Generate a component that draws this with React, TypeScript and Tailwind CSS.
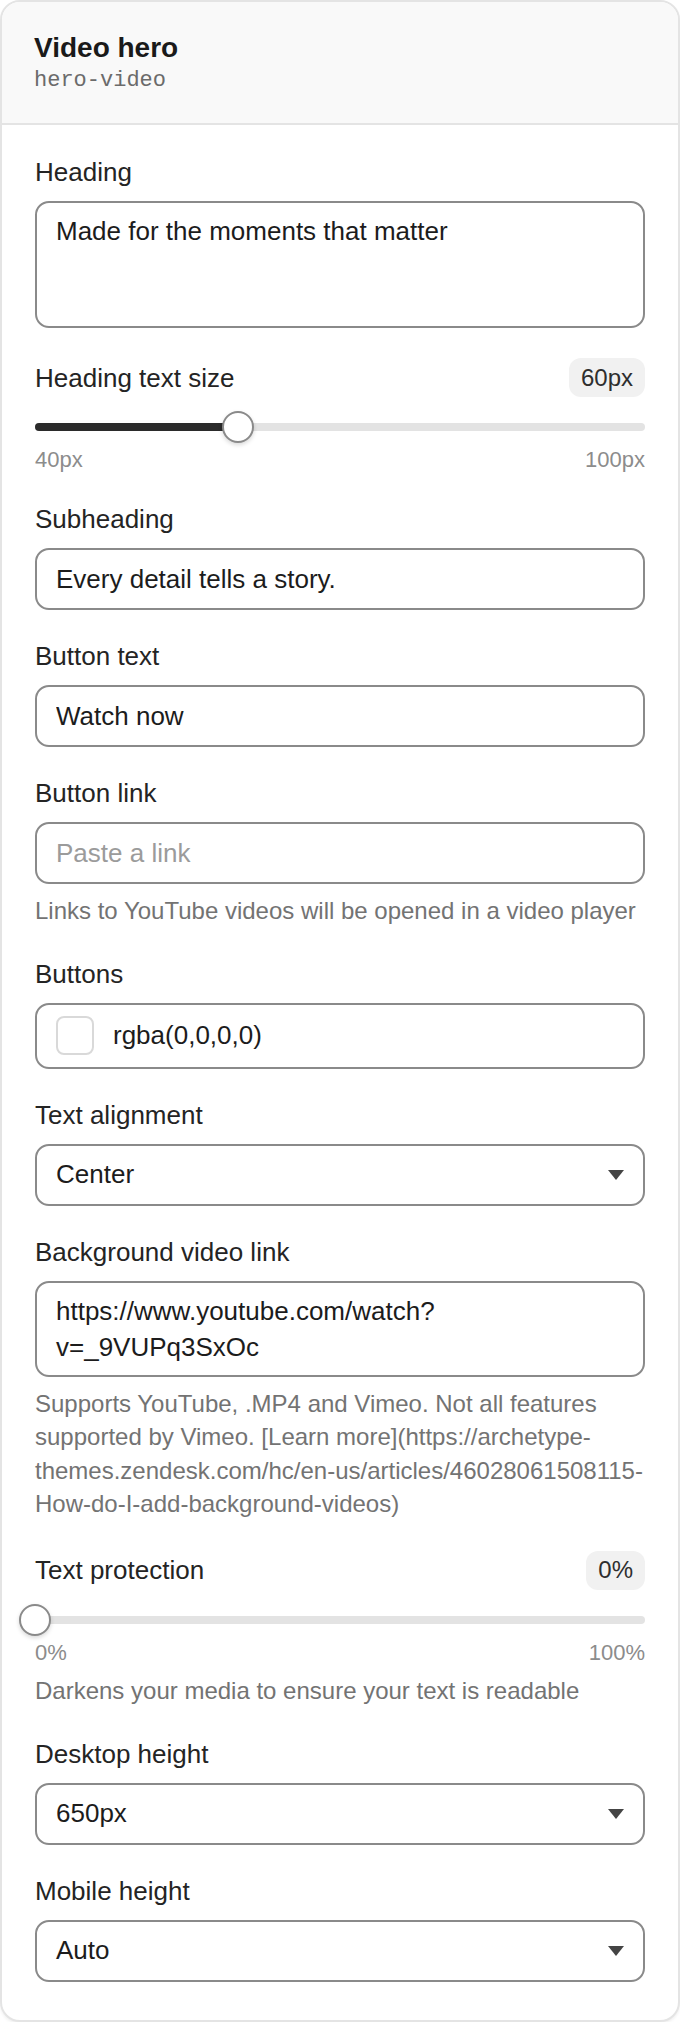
import React from 'react';

const sans = { fontFamily: '"Liberation Sans", Arial, sans-serif' };

function Label({ children }: { children: React.ReactNode }) {
  return <div className="text-[26px] leading-8 text-[#242424] mb-[13px]">{children}</div>;
}

function Help({ children }: { children: React.ReactNode }) {
  return <p className="mt-[10px] text-[24px] leading-[33.5px] text-[#737373]">{children}</p>;
}

function Caret() {
  return (
    <svg width="16" height="10" viewBox="0 0 16 10" className="shrink-0">
      <path d="M0 0h16L8 10z" fill="#444444" />
    </svg>
  );
}

function TextInput({ value, placeholder }: { value?: string; placeholder?: string }) {
  return (
    <input
      type="text"
      readOnly
      value={value ?? ''}
      placeholder={placeholder}
      className="block w-full h-[62px] rounded-[14px] border-2 border-[#8a8a8a] bg-white px-[19px] text-[26px] text-[#1c1c1c] placeholder:text-[#9b9b9b] outline-none"
    />
  );
}

function Select({ value }: { value: string }) {
  return (
    <div className="flex h-[62px] w-full items-center justify-between rounded-[14px] border-2 border-[#8a8a8a] bg-white pl-[19px] pr-[19px]">
      <span className="text-[26px] text-[#1c1c1c]">{value}</span>
      <Caret />
    </div>
  );
}

function Slider({ label, value, pct, min, max }: { label: string; value: string; pct: number; min: string; max: string }) {
  return (
    <div>
      <div className="flex h-[39px] items-center justify-between">
        <span className="text-[26px] leading-8 text-[#242424]">{label}</span>
        <span className="flex h-[39px] items-center rounded-[12px] bg-[#f1f1f1] px-3 text-[24px] text-[#2e2e2e]">{value}</span>
      </div>
      <div className="relative mt-[26px] h-2 rounded-full bg-[#e3e3e3]">
        <div className="h-2 rounded-full bg-[#2b2b2b]" style={{ width: `${pct}%` }} />
        <div
          className="absolute top-1/2 h-[32px] w-[32px] -translate-x-1/2 -translate-y-1/2 rounded-full border-2 border-[#8a8a8a] bg-white shadow-[0_2px_4px_rgba(0,0,0,0.15)]"
          style={{ left: `${pct}%` }}
        />
      </div>
      <div className="mt-4 flex justify-between text-[22px] leading-[26px] text-[#8c8c8c]">
        <span>{min}</span>
        <span>{max}</span>
      </div>
    </div>
  );
}

export default function App() {
  return (
    <div className="min-h-screen bg-white" style={sans}>
      <div className="overflow-hidden rounded-[20px] border-2 border-[#e4e4e4] bg-white shadow-[0_2px_3px_rgba(0,0,0,0.06)]">
        {/* header */}
        <div className="border-b-2 border-[#e4e4e4] bg-[#f9f9f9] px-[32px] pt-[30px] pb-[28px]">
          <h1 className="text-[28px] font-bold leading-8 text-[#1a1a1a]">Video hero</h1>
          <div className="mt-[3px] text-[22px] leading-[28px] text-[#6b6b6b]" style={{ fontFamily: '"Liberation Mono", monospace' }}>
            hero-video
          </div>
        </div>

        <div className="flex flex-col gap-[30px] px-[33px] pt-[31px] pb-[38px]">
          <div>
            <Label>Heading</Label>
            <textarea
              readOnly
              value="Made for the moments that matter"
              className="block h-[127px] w-full resize-none rounded-[14px] border-2 border-[#8a8a8a] bg-white px-[19px] py-[10px] text-[26px] leading-[36px] text-[#1c1c1c] outline-none"
            />
          </div>

          <Slider label="Heading text size" value="60px" pct={33.333} min="40px" max="100px" />

          <div>
            <Label>Subheading</Label>
            <TextInput value="Every detail tells a story." />
          </div>

          <div>
            <Label>Button text</Label>
            <TextInput value="Watch now" />
          </div>

          <div>
            <Label>Button link</Label>
            <TextInput placeholder="Paste a link" />
            <Help>Links to YouTube videos will be opened in a video player</Help>
          </div>

          <div>
            <Label>Buttons</Label>
            <div className="flex h-[66px] w-full items-center gap-[19px] rounded-[14px] border-2 border-[#8a8a8a] bg-white pl-[19px]">
              <span className="block h-[39px] w-[38px] rounded-[8px] border-2 border-[#d9d9d9] bg-transparent" />
              <span className="text-[26px] text-[#1c1c1c]">rgba(0,0,0,0)</span>
            </div>
          </div>

          <div>
            <Label>Text alignment</Label>
            <Select value="Center" />
          </div>

          <div>
            <Label>Background video link</Label>
            <textarea
              readOnly
              value="https://www.youtube.com/watch?v=_9VUPq3SxOc"
              className="block h-[96px] w-full resize-none rounded-[14px] border-2 border-[#8a8a8a] bg-white px-[19px] py-[10px] text-[26px] leading-[36px] text-[#1c1c1c] outline-none"
            />
            <Help>
              Supports YouTube, .MP4 and Vimeo. Not all features supported by Vimeo. [Learn
              more](https://archetype-themes.zendesk.com/hc/en-us/articles/46028061508115-How-do-I-add-background-videos)
            </Help>
          </div>

          <div>
            <Slider label="Text protection" value="0%" pct={0} min="0%" max="100%" />
            <p className="mt-2 text-[24px] leading-[34px] text-[#737373]">Darkens your media to ensure your text is readable</p>
          </div>

          <div>
            <Label>Desktop height</Label>
            <Select value="650px" />
          </div>

          <div>
            <Label>Mobile height</Label>
            <Select value="Auto" />
          </div>
        </div>
      </div>
    </div>
  );
}
